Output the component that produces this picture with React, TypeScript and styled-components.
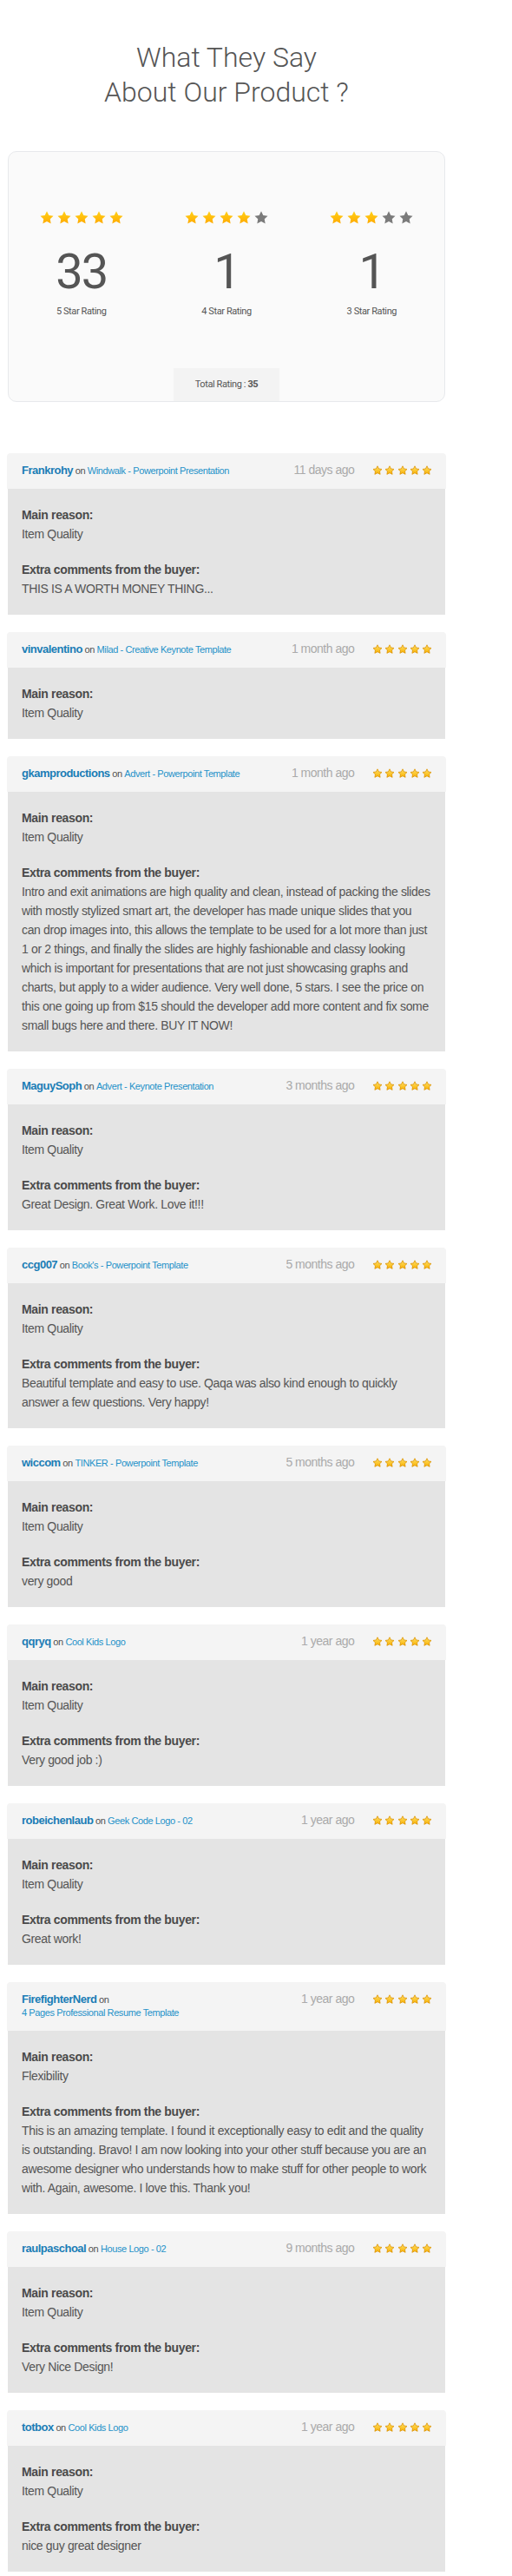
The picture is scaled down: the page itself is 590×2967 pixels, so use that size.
import React, { useId } from "react"
import styled, { createGlobalStyle } from "styled-components"

interface Review {
    user: string
    item: string
    date: string
    reason: string
    comment?: string
}

const reviews: Review[] = [
    { user: "Frankrohy", item: "Windwalk - Powerpoint Presentation", date: "11 days ago", reason: "Item Quality", comment: "THIS IS A WORTH MONEY THING..." },
    { user: "vinvalentino", item: "Milad - Creative Keynote Template", date: "1 month ago", reason: "Item Quality" },
    {
        user: "gkamproductions", item: "Advert - Powerpoint Template", date: "1 month ago", reason: "Item Quality",
        comment: "Intro and exit animations are high quality and clean, instead of packing the slides with mostly stylized smart art, the developer has made unique slides that you can drop images into, this allows the template to be used for a lot more than just 1 or 2 things, and finally the slides are highly fashionable and classy looking which is important for presentations that are not just showcasing graphs and charts, but apply to a wider audience. Very well done, 5 stars. I see the price on this one going up from $15 should the developer add more content and fix some small bugs here and there. BUY IT NOW!",
    },
    { user: "MaguySoph", item: "Advert - Keynote Presentation", date: "3 months ago", reason: "Item Quality", comment: "Great Design. Great Work. Love it!!!" },
    { user: "ccg007", item: "Book's - Powerpoint Template", date: "5 months ago", reason: "Item Quality", comment: "Beautiful template and easy to use. Qaqa was also kind enough to quickly answer a few questions. Very happy!" },
    { user: "wiccom", item: "TINKER - Powerpoint Template", date: "5 months ago", reason: "Item Quality", comment: "very good" },
    { user: "qqryq", item: "Cool Kids Logo", date: "1 year ago", reason: "Item Quality", comment: "Very good job :)" },
    { user: "robeichenlaub", item: "Geek Code Logo - 02", date: "1 year ago", reason: "Item Quality", comment: "Great work!" },
    {
        user: "FirefighterNerd", item: "4 Pages Professional Resume Template", date: "1 year ago", reason: "Flexibility",
        comment: "This is an amazing template. I found it exceptionally easy to edit and the quality is outstanding. Bravo! I am now looking into your other stuff because you are an awesome designer who understands how to make stuff for other people to work with. Again, awesome. I love this. Thank you!",
    },
    { user: "raulpaschoal", item: "House Logo - 02", date: "9 months ago", reason: "Item Quality", comment: "Very Nice Design!" },
    { user: "totbox", item: "Cool Kids Logo", date: "1 year ago", reason: "Item Quality", comment: "nice guy great designer" },
]

const summary = [
    { stars: 5, count: 33, label: "5 Star Rating" },
    { stars: 4, count: 1, label: "4 Star Rating" },
    { stars: 3, count: 1, label: "3 Star Rating" },
]

const STAR_PATH = "M12 1.6l3.1 6.3 6.9 1-5 4.9 1.2 6.9L12 17.4l-6.2 3.3L7 13.8 2 8.9l6.9-1z"

const BigStar: React.FC<{ on: boolean }> = ({ on }) => {
    const id = useId()
    return (
        <svg width="18" height="18" viewBox="0 0 24 24">
            <defs>
                <linearGradient id={id} x1="0" y1="0" x2="0" y2="1">
                    <stop offset="0" stopColor="#ffd21a" />
                    <stop offset="1" stopColor="#ffaa00" />
                </linearGradient>
            </defs>
            <path d={STAR_PATH} fill={on ? `url(#${id})` : "#7b7b7b"} />
        </svg>
    )
}

const SmallStar: React.FC = () => {
    const id = useId()
    return (
        <svg width="12" height="12" viewBox="0 0 24 24">
            <defs>
                <linearGradient id={id} x1="0" y1="0" x2="0" y2="1">
                    <stop offset="0" stopColor="#ffe36a" />
                    <stop offset="1" stopColor="#f9b000" />
                </linearGradient>
            </defs>
            <path d={STAR_PATH} fill={`url(#${id})`} stroke="#dc9200" strokeWidth="1.6" strokeLinejoin="round" />
        </svg>
    )
}

const ReviewCard: React.FC<{ review: Review }> = ({ review }) => (
    <Card>
        <CardHeader>
            <Who>
                <User>{review.user}</User> <On>on</On> <ItemLink>{review.item}</ItemLink>
            </Who>
            <Meta>
                <DateText>{review.date}</DateText>
                <SmallStars>
                    {[0, 1, 2, 3, 4].map((i) => <SmallStar key={i} />)}
                </SmallStars>
            </Meta>
        </CardHeader>
        <CardBody>
            <Block>
                <Label>Main reason:</Label>
                <Value>{review.reason}</Value>
            </Block>
            {review.comment &&
                <Block>
                    <Label>Extra comments from the buyer:</Label>
                    <Value>{review.comment}</Value>
                </Block>
            }
        </CardBody>
    </Card>
)

export default function App() {
    return <>
        <GlobalStyle />
        <Page>
            <Title>What They Say<br />About Our Product ?</Title>

            <Summary>
                <Columns>
                    {summary.map((s) => (
                        <Column key={s.label}>
                            <BigStars>
                                {[0, 1, 2, 3, 4].map((i) => <BigStar key={i} on={i < s.stars} />)}
                            </BigStars>
                            <Count>{s.count}</Count>
                            <CountLabel>{s.label}</CountLabel>
                        </Column>
                    ))}
                </Columns>
                <Total>Total Rating : <b>35</b></Total>
            </Summary>

            <List>
                {reviews.map((r) => <ReviewCard key={r.user} review={r} />)}
            </List>
        </Page>
    </>
}


const GlobalStyle = createGlobalStyle`
    body {
        margin: 0;
        background: #fff;
        font-family: "Liberation Sans", Arial, sans-serif;
    }
`

const Page = styled.div`
    width: 506px;
    padding: 46px 0 11px 8px;
`

const Title = styled.h1`
    margin: 0;
    font-family: Roboto, "Liberation Sans", sans-serif;
    font-weight: 300;
    font-size: 32px;
    line-height: 40px;
    color: #555;
    text-align: center;
`

const Summary = styled.div`
    margin: 48px 1px 0;
    height: 289px;
    box-sizing: border-box;
    border: 1px solid #e7e9ec;
    border-radius: 10px;
    background: #fafafa;
    display: flex;
    flex-direction: column;
    align-items: center;
    font-family: Roboto, "Liberation Sans", sans-serif;
    color: #555;
`

const Columns = styled.div`
    align-self: stretch;
    display: grid;
    grid-template-columns: repeat(3, 1fr);
    padding-top: 67px;
`

const Column = styled.div`
    display: flex;
    flex-direction: column;
    align-items: center;
`

const BigStars = styled.div`
    display: flex;
    gap: 2px;
    height: 18px;
`

const Count = styled.div`
    margin-top: 23px;
    font-size: 56px;
    line-height: 60px;
    letter-spacing: -2px;
`

const CountLabel = styled.div`
    margin-top: 9px;
    font-size: 11px;
    line-height: 14px;
    letter-spacing: -0.4px;
`

const Total = styled.div`
    margin-top: auto;
    width: 122px;
    height: 38px;
    line-height: 38px;
    text-align: center;
    background: #f3f3f3;
    font-size: 11px;
    letter-spacing: -0.4px;

    b {
        font-weight: 700;
    }
`

const List = styled.div`
    margin-top: 59px;
    display: flex;
    flex-direction: column;
    gap: 20px;
`

const Card = styled.div`
    display: flex;
    flex-direction: column;
`

const CardHeader = styled.div`
    display: flex;
    align-items: flex-start;
    padding: 12px 16px 13px 17px;
    background: #f4f4f4;
    border-radius: 4px 4px 0 0;
    line-height: 15px;
`

const Who = styled.div`
    width: 272px;
    font-size: 11px;
    letter-spacing: -0.4px;
    color: #555;
`

const User = styled.span`
    font-size: 13px;
    font-weight: 700;
    letter-spacing: -0.5px;
    color: #1b7db6;
`

const On = styled.span`
    color: #505050;
`

const ItemLink = styled.span`
    display: inline-block;
    white-space: nowrap;
    color: #2492c9;
`

const Meta = styled.div`
    margin-left: auto;
    display: flex;
    align-items: center;
    gap: 21px;
    height: 15px;
`

const DateText = styled.span`
    font-size: 14px;
    letter-spacing: -0.5px;
    color: #aaa;
`

const SmallStars = styled.div`
    display: flex;
    gap: 2.2px;
`

const CardBody = styled.div`
    margin: 0 1px;
    padding: 19px 17px 19px 16px;
    background: #e4e4e4;
    display: flex;
    flex-direction: column;
    gap: 19px;
`

const Block = styled.div`
    font-size: 14px;
    line-height: 22px;
    letter-spacing: -0.35px;
`

const Label = styled.div`
    font-weight: 700;
    color: #4a4a4a;
`

const Value = styled.div`
    color: #555;
`
